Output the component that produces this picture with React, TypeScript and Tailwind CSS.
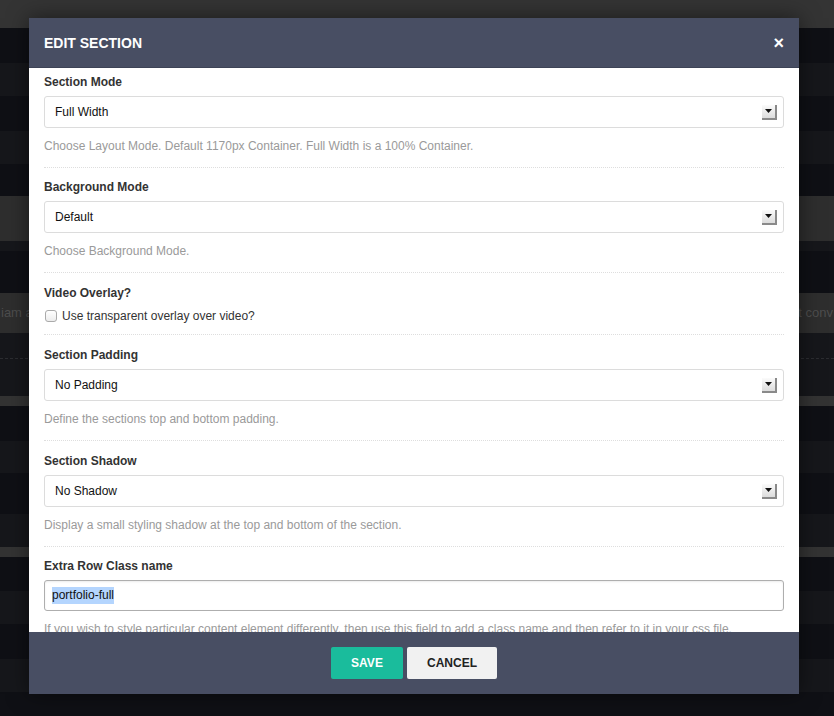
const bands = [
  "h-[28px] bg-[#343434]",
  "h-[35px] bg-[#0f1015]",
  "h-[33px] bg-[#16171b]",
  "h-[35px] bg-[#0f1015]",
  "h-[33px] bg-[#16171b]",
  "h-[32px] bg-[#0f1015]",
  "h-[45px] bg-[#2e2e2e]",
  "h-[10px] bg-[#16171b]",
  "h-[42px] bg-[#0f1015]",
]

const bandsLower = [
  "h-[10px] bg-[#333333]",
  "h-[35px] bg-[#0f1015]",
  "h-[32px] bg-[#16171b]",
  "h-[41px] bg-[#0f1015]",
  "h-[33px] bg-[#16171b]",
  "h-[10px] bg-[#333333]",
  "h-[34px] bg-[#0f1015]",
  "h-[33px] bg-[#16171b]",
  "h-[35px] bg-[#0f1015]",
  "h-[33px] bg-[#16171b]",
  "h-[24px] bg-[#0f1015]",
]

function SelectArrow() {
  return (
    <span className="flex h-[15px] w-[15px] items-start justify-center border-r-2 border-b-2 border-[#8a8a8a] bg-gradient-to-b from-[#fbfbfb] to-[#dcdcdc] pt-[4px]">
      <svg width="7" height="5" viewBox="0 0 7 5">
        <path d="M0 0 L7 0 L3.5 4 Z" fill="#111" />
      </svg>
    </span>
  )
}

function Select({ value }: { value: string }) {
  return (
    <div className="flex h-[32px] items-center justify-between rounded-[3px] border border-[#dcdcdc] bg-white pl-[10px] pr-[6px]">
      <span className="text-[12px] text-[#111]">{value}</span>
      <SelectArrow />
    </div>
  )
}

function SelectSection({ label, value, help, pad }: { label: string; value: string; help: string; pad: string }) {
  return (
    <div className={pad}>
      <div className="mb-[5px] text-[12px] font-bold leading-[18px] text-[#333]">{label}</div>
      <Select value={value} />
      <div className="mt-[9px] text-[12px] leading-[18px] text-[#9a9a9a]">{help}</div>
    </div>
  )
}

export default function App() {
  return (
    <div className="relative h-[716px] w-[834px] overflow-hidden bg-[#0f1015] font-['Liberation_Sans',Arial,sans-serif]">
      {/* page behind the dialog */}
      <div className="flex flex-col">
        {bands.map((b, i) => (
          <div key={i} className={b} />
        ))}
        <div className="flex h-[40px] items-center justify-between overflow-hidden whitespace-nowrap bg-[#2e2e2e] pl-[1px] pr-[1px] text-[13px] text-[#4d4d4d]">
          <span>iam a</span>
          <span>t conv</span>
        </div>
        <div className="h-[63px] bg-[#16171b] pt-[25px]">
          <div className="border-t border-dashed border-[#2c2d31]" />
        </div>
        {bandsLower.map((b, i) => (
          <div key={i} className={b} />
        ))}
      </div>

      {/* dialog */}
      <div className="absolute top-[18px] left-[29px] flex h-[676px] w-[770px] flex-col shadow-[0_0_20px_rgba(0,0,0,0.5)]">
        <div className="flex h-[50px] items-center justify-between border-b border-[#3d4356] bg-[#484e63] px-[15px] pt-[1px]">
          <span className="text-[14px] font-bold text-white">EDIT SECTION</span>
          <span className="text-[18px] leading-none font-bold text-white">×</span>
        </div>

        <div className="flex-1 overflow-hidden bg-white px-[15px]">
          <SelectSection
            pad="border-b border-dotted border-[#dedede] pt-[5px] pb-[12px]"
            label="Section Mode"
            value="Full Width"
            help="Choose Layout Mode. Default 1170px Container. Full Width is a 100% Container."
          />
          <SelectSection
            pad="border-b border-dotted border-[#dedede] pt-[10px] pb-[12px]"
            label="Background Mode"
            value="Default"
            help="Choose Background Mode."
          />

          <div className="border-b border-dotted border-[#dedede] pt-[11px] pb-[9px]">
            <div className="text-[12px] font-bold leading-[18px] text-[#333]">Video Overlay?</div>
            <label className="mt-[5px] flex items-center gap-[5px] text-[12px] leading-[18px] text-[#333]">
              <span className="ml-[1px] h-[12px] w-[12px] rounded-[3px] border border-[#aaa] bg-gradient-to-b from-white to-[#ececec]" />
              Use transparent overlay over video?
            </label>
          </div>

          <SelectSection
            pad="border-b border-dotted border-[#dedede] pt-[11px] pb-[12px]"
            label="Section Padding"
            value="No Padding"
            help="Define the sections top and bottom padding."
          />
          <SelectSection
            pad="border-b border-dotted border-[#dedede] pt-[11px] pb-[12px]"
            label="Section Shadow"
            value="No Shadow"
            help="Display a small styling shadow at the top and bottom of the section."
          />

          <div className="pt-[10px]">
            <div className="mb-[5px] text-[12px] font-bold leading-[18px] text-[#333]">Extra Row Class name</div>
            <div className="flex h-[31px] items-center rounded-[3px] border border-[#aeaeae] bg-white pl-[7px] shadow-[inset_0_1px_2px_rgba(0,0,0,0.08)]">
              <span className="bg-[#b4d5fe] text-[12px] leading-[17px] text-[#111]">portfolio-full</span>
            </div>
            <div className="mt-[9px] whitespace-nowrap text-[12px] leading-[18px] text-[#9a9a9a]">
              If you wish to style particular content element differently, then use this field to add a class name and then refer to it in your css file.
            </div>
          </div>
        </div>

        <div className="flex h-[62px] items-center justify-center gap-[4px] bg-[#484e63]">
          <button className="h-[32px] w-[72px] rounded-[2px] bg-[#1abc9c] text-[12px] font-bold text-white">SAVE</button>
          <button className="h-[32px] w-[90px] rounded-[2px] bg-[#f1f1f1] text-[12px] font-bold text-[#222]">CANCEL</button>
        </div>
      </div>
    </div>
  )
}
